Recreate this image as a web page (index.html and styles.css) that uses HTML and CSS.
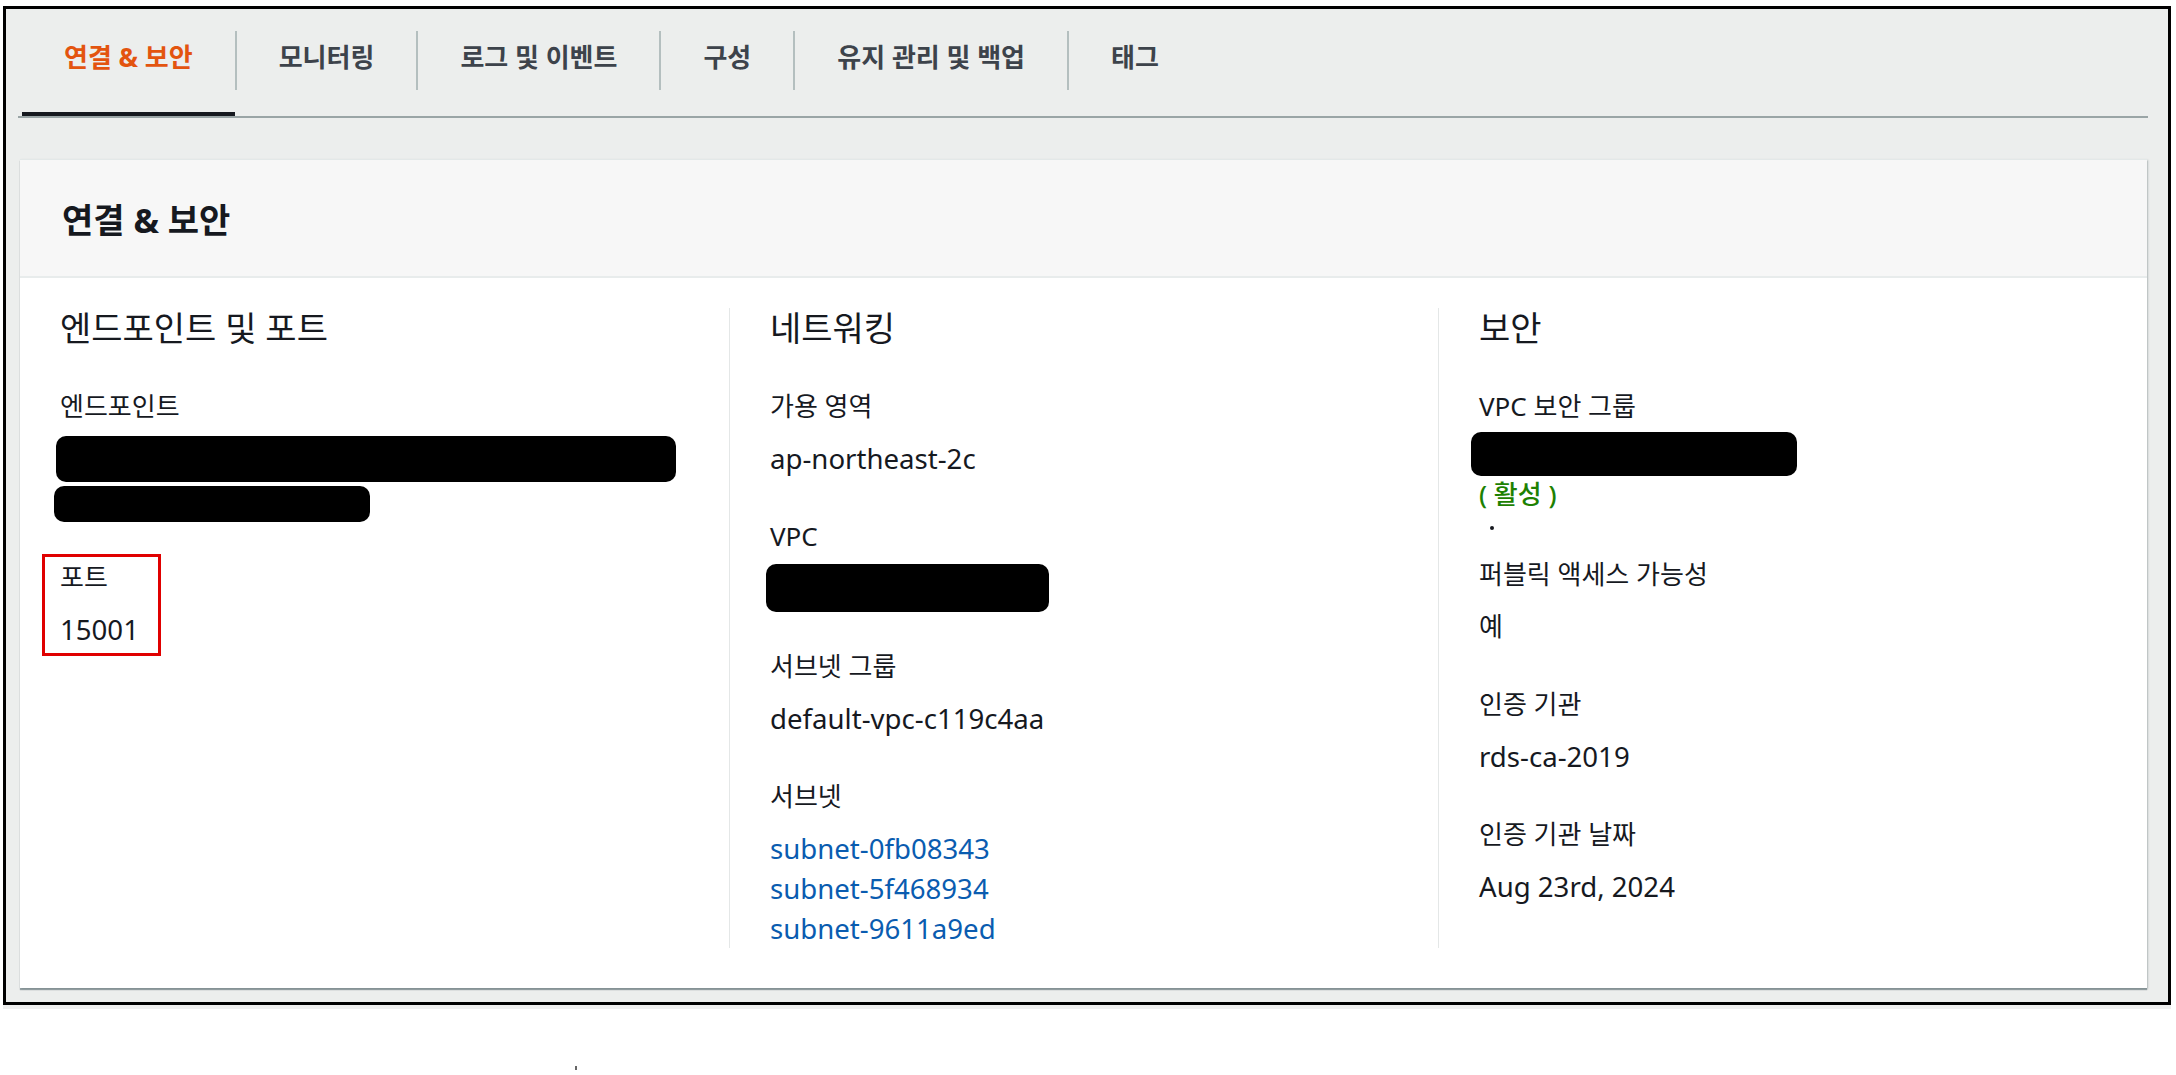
FILE: index.html
```html
<!DOCTYPE html>
<html lang="ko">
<head>
  <meta charset="UTF-8">
  <title>연결 &amp; 보안</title>
  <link rel="stylesheet" href="styles.css">
</head>
<body>
  <div class="frame">
    <nav class="tabs">
      <a class="tab active">연결 &amp; 보안</a>
      <span class="sep"></span>
      <a class="tab">모니터링</a>
      <span class="sep"></span>
      <a class="tab">로그 및 이벤트</a>
      <span class="sep"></span>
      <a class="tab">구성</a>
      <span class="sep"></span>
      <a class="tab">유지 관리 및 백업</a>
      <span class="sep"></span>
      <a class="tab">태그</a>
    </nav>

    <section class="card">
      <header class="card-header">
        <h2>연결 &amp; 보안</h2>
      </header>
      <div class="card-body">
        <div class="col">
          <h3 class="heading">엔드포인트 및 포트</h3>
          <div class="field">
            <div class="label">엔드포인트</div>
            <div class="value">
              <div class="redact endpoint-1"></div>
              <div class="redact endpoint-2"></div>
            </div>
          </div>
          <div class="field port-box">
            <div class="label">포트</div>
            <div class="value">15001</div>
          </div>
        </div>

        <div class="col">
          <h3 class="heading">네트워킹</h3>
          <div class="field">
            <div class="label">가용 영역</div>
            <div class="value">ap-northeast-2c</div>
          </div>
          <div class="field">
            <div class="label">VPC</div>
            <div class="value">
              <div class="redact vpc"></div>
            </div>
          </div>
          <div class="field">
            <div class="label">서브넷 그룹</div>
            <div class="value">default-vpc-c119c4aa</div>
          </div>
          <div class="field">
            <div class="label">서브넷</div>
            <div class="value">
              <a class="link">subnet-0fb08343</a>
              <a class="link">subnet-5f468934</a>
              <a class="link">subnet-9611a9ed</a>
            </div>
          </div>
        </div>

        <div class="col">
          <h3 class="heading">보안</h3>
          <div class="field">
            <div class="label">VPC 보안 그룹</div>
            <div class="value">
              <div class="redact sg"></div>
              <div class="status">( 활성 )</div>
              <div class="bullet"></div>
            </div>
          </div>
          <div class="field">
            <div class="label">퍼블릭 액세스 가능성</div>
            <div class="value hangul">예</div>
          </div>
          <div class="field">
            <div class="label">인증 기관</div>
            <div class="value">rds-ca-2019</div>
          </div>
          <div class="field">
            <div class="label">인증 기관 날짜</div>
            <div class="value">Aug 23rd, 2024</div>
          </div>
        </div>
      </div>
    </section>
  </div>
  <div class="speck"></div>
</body>
</html>
```

FILE: styles.css
```css
body {
  margin: 0;
  background: #fff;
  font-family: "Noto Sans", "Noto Sans CJK KR", sans-serif;
  color: #16191f;
}
.frame {
  margin: 6px 0 0 3px;
  width: 2162px;
  border: 3px solid #000;
  background: #eceeed;
  padding-bottom: 14px;
  box-shadow: 0 4px 0 #eeefef;
}
.tabs {
  display: flex;
  align-items: center;
  margin: 0 20px 0 12px;
  padding-left: 4px;
  border-bottom: 2px solid #9aa5a6;
}
.tab {
  display: block;
  padding: 33px 42px 0;
  height: 70px;
  line-height: 30px;
  font-size: 26px;
  font-weight: bold;
  color: #3d434b;
  border-bottom: 4px solid transparent;
}
.tab.active {
  color: #e3540f;
  border-bottom-color: #16191f;
}
.sep {
  width: 2px;
  height: 59px;
  margin-bottom: 4px;
  background: #b4bfbf;
}
.card {
  margin: 41px 21px 0 14px;
  background: #fff;
  border-top: 1px solid #e3e8e8;
  box-shadow: 0 2px 1px rgba(0, 28, 36, 0.35), 1px 1px 2px rgba(0, 28, 36, 0.2);
}
.card-header {
  display: flex;
  align-items: center;
  height: 116px;
  padding-left: 42px;
  background: #f7f7f7;
  border-bottom: 2px solid #e8ecec;
}
.card-header h2 {
  margin: 0;
  font-size: 34px;
  font-weight: bold;
  color: #16191f;
}
.card-body {
  display: grid;
  grid-template-columns: 1fr 1fr 1fr;
  padding: 30px 0 40px;
}
.col {
  padding: 0 40px;
}
.col + .col {
  border-left: 1px solid #e4e7e7;
}
.heading {
  margin: 0 0 38px;
  font-size: 34px;
  font-weight: normal;
  line-height: 40px;
}
.field {
  margin-bottom: 38px;
  font-size: 26px;
  line-height: 40px;
}
.field:last-child {
  margin-bottom: 0;
}
.value {
  margin-top: 12px;
  font-size: 27.6px;
}
.value.hangul {
  font-size: 26px;
}
.redact {
  background: #000;
  border-radius: 10px;
}
.endpoint-1 {
  width: 620px;
  height: 46px;
  margin: -2px 0 0 -4px;
}
.endpoint-2 {
  width: 316px;
  height: 36px;
  margin: 4px 0 0 -6px;
}
.vpc {
  width: 283px;
  height: 48px;
  margin: -4px 0 -4px -4px;
}
.sg {
  width: 326px;
  height: 44px;
  margin: -6px 0 -2px -8px;
}
.port-box {
  width: fit-content;
  margin-top: -6px;
  margin-left: -18px;
  padding: 0 19px 4px 15px;
  border: 3px solid #e00000;
}
.link {
  display: block;
  color: #0a5cb0;
}
.status {
  font-size: 26px;
  font-weight: 500;
  color: #1d8102;
}
.bullet {
  height: 2px;
}
.bullet::before {
  content: "";
  display: block;
  width: 4px;
  height: 4px;
  border-radius: 50%;
  background: #16191f;
  transform: translate(11px, 12px);
}
.speck {
  width: 2px;
  height: 4px;
  margin: 61px 0 0 575px;
  background: #666;
}
```
